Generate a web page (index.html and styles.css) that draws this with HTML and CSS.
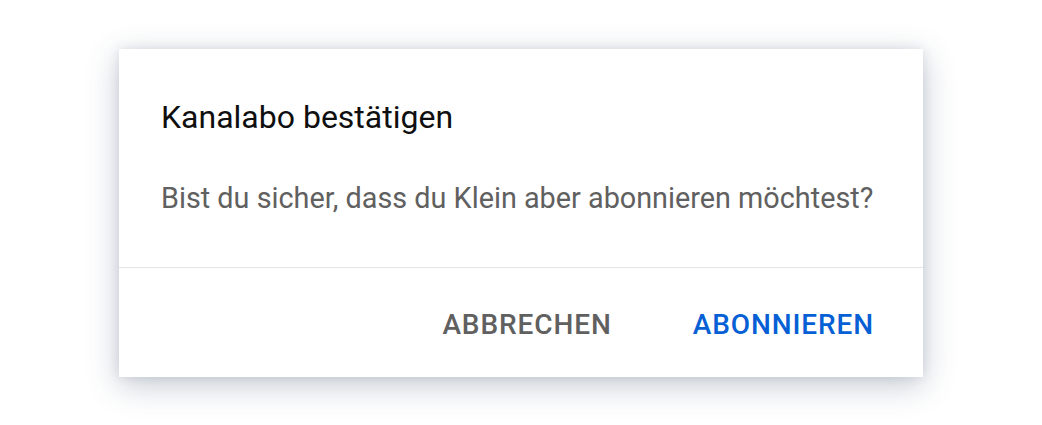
FILE: index.html
```html
<!DOCTYPE html>
<html lang="de">
<head>
<meta charset="utf-8">
<link rel="stylesheet" href="styles.css">
</head>
<body>
<div class="dialog">
  <div class="content">
    <h2 class="title">Kanalabo bestätigen</h2>
    <p class="message">Bist du sicher, dass du Klein aber abonnieren möchtest?</p>
  </div>
  <div class="actions">
    <button class="btn btn-cancel">ABBRECHEN</button>
    <button class="btn btn-confirm">ABONNIEREN</button>
  </div>
</div>
</body>
</html>
```
FILE: styles.css
```css
html, body {
  margin: 0;
  padding: 0;
  background: #ffffff;
}
body {
  font-family: Roboto, "Liberation Sans", sans-serif;
  padding: 49px 0 48px 119px;
  min-height: 425px;
  box-sizing: border-box;
  overflow: hidden;
}
.dialog {
  width: 804px;
  height: 328px;
  background: #ffffff;
  box-shadow: 0 8px 30px rgba(60, 80, 110, 0.3), 0 0 10px rgba(60, 80, 110, 0.12);
  display: flex;
  flex-direction: column;
  box-sizing: border-box;
}
.content {
  padding: 48px 42px 0 42px;
  height: 219px;
  box-sizing: border-box;
  border-bottom: 1px solid #e5e5e5;
}
.title {
  margin: 0;
  font-size: 32px;
  line-height: 40px;
  font-weight: 400;
  color: #0f0f0f;
}
.message {
  margin: 43px 0 0 0;
  font-size: 28.8px;
  line-height: 36px;
  color: #606060;
}
.actions {
  display: flex;
  justify-content: flex-end;
  gap: 81px;
  padding: 39px 49px 0 0;
}
.btn {
  border: 0;
  background: none;
  padding: 0;
  font-family: Roboto, "Liberation Sans", sans-serif;
  font-size: 28px;
  line-height: 36px;
  font-weight: 500;
  letter-spacing: 0.9px;
}
.btn-cancel { color: #606060; }
.btn-confirm { color: #065fd4; }
```
